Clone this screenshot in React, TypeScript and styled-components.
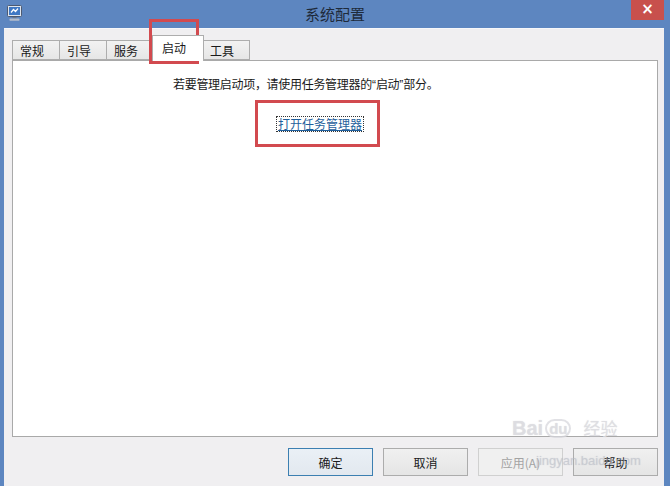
import styled, { createGlobalStyle } from 'styled-components';

const GlobalStyle = createGlobalStyle`
  html, body {
    margin: 0;
    padding: 0;
  }
  body {
    width: 670px;
    height: 486px;
    overflow: hidden;
    font-family: "Noto Sans CJK SC", "Noto Sans", sans-serif;
  }
`;

const tabs = ['常规', '引导', '服务', '启动', '工具'];
const active = '启动';

const buttons = [
  { label: '确定', kind: 'default' },
  { label: '取消', kind: 'normal' },
  { label: '应用(A)', kind: 'disabled' },
  { label: '帮助', kind: 'normal' },
];

function AppIcon() {
  return (
    <svg width="15" height="16" viewBox="0 0 15 16">
      <rect x="0.5" y="0.5" width="14" height="11" rx="1" fill="#dfe6ef" stroke="#4c5a72" />
      <rect x="2" y="2" width="11" height="8" fill="#3f78c4" />
      <path d="M4 7.5 L6.5 4.5 L8.5 6.5 L11 3.5" stroke="#fff" strokeWidth="1.2" fill="none" />
      <rect x="5.5" y="12" width="4" height="1.5" fill="#6b7788" />
      <rect x="2.5" y="13.5" width="10" height="2.2" rx="0.6" fill="#b3bccb" />
    </svg>
  );
}

export default function App() {
  return (
    <>
      <GlobalStyle />
      <Window>
        <TitleBar>
          <IconCell>
            <AppIcon />
          </IconCell>
          <Title>系统配置</Title>
          <CloseCell>
            <CloseButton>×</CloseButton>
          </CloseCell>
        </TitleBar>
        <Body>
          <TabRow>
            {tabs.map((t) => (
              <Tab key={t} $active={t === active}>
                {t}
              </Tab>
            ))}
          </TabRow>
          <Panel>
            <Hint>
              若要管理启动项，请使用任务管理器的<Quote>“</Quote>启动<Quote>”</Quote>部分。
            </Hint>
            <TaskLink>打开任务管理器</TaskLink>
          </Panel>
          <Footer>
            {buttons.map((b) => (
              <Button key={b.label} $kind={b.kind}>
                {b.label}
              </Button>
            ))}
          </Footer>
        </Body>
        <TabMark />
        <LinkMark />
        <Watermark>
          <WmLogo>
            Bai<Paw>du</Paw>
            <WmCn>经验</WmCn>
          </WmLogo>
          <WmUrl>jingyan.baidu.com</WmUrl>
        </Watermark>
      </Window>
    </>
  );
}

const Window = styled.div`
  position: relative;
  width: 670px;
  height: 486px;
  display: flex;
  flex-direction: column;
  background: #5d86c0;
`;

const TitleBar = styled.div`
  height: 28px;
  display: grid;
  grid-template-columns: 1fr auto 1fr;
  align-items: center;
`;

const IconCell = styled.div`
  display: flex;
  padding-left: 7px;
  padding-bottom: 3px;
`;

const Title = styled.div`
  font-size: 15px;
  color: #1e2a3a;
  padding-bottom: 2px;
`;

const CloseCell = styled.div`
  display: flex;
  justify-content: flex-end;
  align-self: start;
  padding-right: 6px;
`;

const CloseButton = styled.div`
  width: 33px;
  height: 20px;
  background: #c8504c;
  color: #fff;
  font-family: "DejaVu Sans", sans-serif;
  font-size: 15px;
  font-weight: bold;
  line-height: 19px;
  text-align: center;
`;

const Body = styled.div`
  flex: 1;
  margin: 0 6px 0 4px;
  background: #f0eff1;
  border-top: 1px solid #f7f7f9;
  padding: 7px 6px 0 8px;
  display: flex;
  flex-direction: column;
`;

const TabRow = styled.div`
  display: flex;
  align-items: flex-end;
  height: 24px;
`;

const Tab = styled.div<{ $active: boolean }>`
  position: relative;
  box-sizing: border-box;
  width: ${(p) => (p.$active ? '52px' : '48px')};
  height: ${(p) => (p.$active ? '26px' : '20px')};
  padding: ${(p) => (p.$active ? '3px 0 0 9px' : '1px 0 0 7px')};
  margin: ${(p) => (p.$active ? '0 -2px -1px -1px' : '0 -1px 0 0')};
  z-index: ${(p) => (p.$active ? 1 : 0)};
  border: 1px solid #adadad;
  border-bottom: ${(p) => (p.$active ? 'none' : '1px solid #adadad')};
  background: ${(p) => (p.$active ? '#ffffff' : 'linear-gradient(#f2f2f2, #e6e6e6)')};
  font-size: 12px;
  line-height: 17px;
  color: #1a1a1a;
`;

const Panel = styled.div`
  flex: 1;
  background: #ffffff;
  border: 1px solid #a9a9a9;
  display: flex;
  flex-direction: column;
  align-items: flex-start;
  padding: 15px 0 0 160px;
`;

const Hint = styled.div`
  font-size: 12px;
  line-height: 16px;
  letter-spacing: -0.3px;
  color: #1a1a1a;
`;

const Quote = styled.span`
  font-family: "Liberation Sans", sans-serif;
  letter-spacing: 0;
`;

const TaskLink = styled.a`
  margin: 24px 0 0 104px;
  font-size: 12px;
  line-height: 14px;
  color: #1f5f9c;
  text-decoration: underline;
  outline: 1px dotted #333;
  outline-offset: 0;
  padding: 0 1px;
  cursor: pointer;
`;

const Footer = styled.div`
  display: flex;
  justify-content: flex-end;
  gap: 10px;
  padding: 11px 0 10px;
`;

const Button = styled.div<{ $kind: string }>`
  box-sizing: border-box;
  width: 85px;
  height: 28px;
  display: flex;
  align-items: center;
  justify-content: center;
  font-size: 12px;
  border: 1px solid
    ${(p) => (p.$kind === 'default' ? '#3c7fb1' : p.$kind === 'disabled' ? '#d0d0d0' : '#acacac')};
  background: ${(p) =>
    p.$kind === 'default'
      ? 'linear-gradient(#eaf0f6, #e2e8ef)'
      : p.$kind === 'disabled'
        ? '#f0f0f0'
        : 'linear-gradient(#f0f0f0, #e5e5e5)'};
  color: ${(p) => (p.$kind === 'disabled' ? '#a3a3a3' : '#1a1a1a')};
`;

const TabMark = styled.div`
  position: absolute;
  left: 149px;
  top: 19px;
  width: 44px;
  height: 39px;
  border: 3px solid #d24a4f;
`;

const LinkMark = styled.div`
  position: absolute;
  left: 255px;
  top: 100px;
  width: 119px;
  height: 41px;
  border: 3px solid #d24a4f;
`;

const Watermark = styled.div`
  position: absolute;
  left: 512px;
  top: 418px;
  pointer-events: none;
  display: flex;
  flex-direction: column;
  align-items: flex-start;
  color: rgba(222, 222, 226, 0.8);
  text-shadow: 0 0 1px rgba(150, 150, 160, 0.35);
`;

const WmLogo = styled.div`
  display: flex;
  align-items: flex-end;
  font-family: "Liberation Sans", sans-serif;
  font-size: 20px;
  font-weight: bold;
  line-height: 20px;
`;

const Paw = styled.span`
  font-size: 15px;
  border-radius: 10px;
  border: 2px solid rgba(215, 215, 220, 0.75);
  padding: 0 2px;
  margin: 0 4px 0 2px;
  line-height: 15px;
`;

const WmCn = styled.span`
  font-family: "Noto Sans CJK SC", sans-serif;
  font-size: 17px;
  font-weight: normal;
  margin-left: 8px;
`;

const WmUrl = styled.div`
  font-family: "Liberation Sans", sans-serif;
  font-size: 13px;
  margin-top: 15px;
  margin-left: 24px;
  color: rgba(190, 196, 206, 0.5);
`;
